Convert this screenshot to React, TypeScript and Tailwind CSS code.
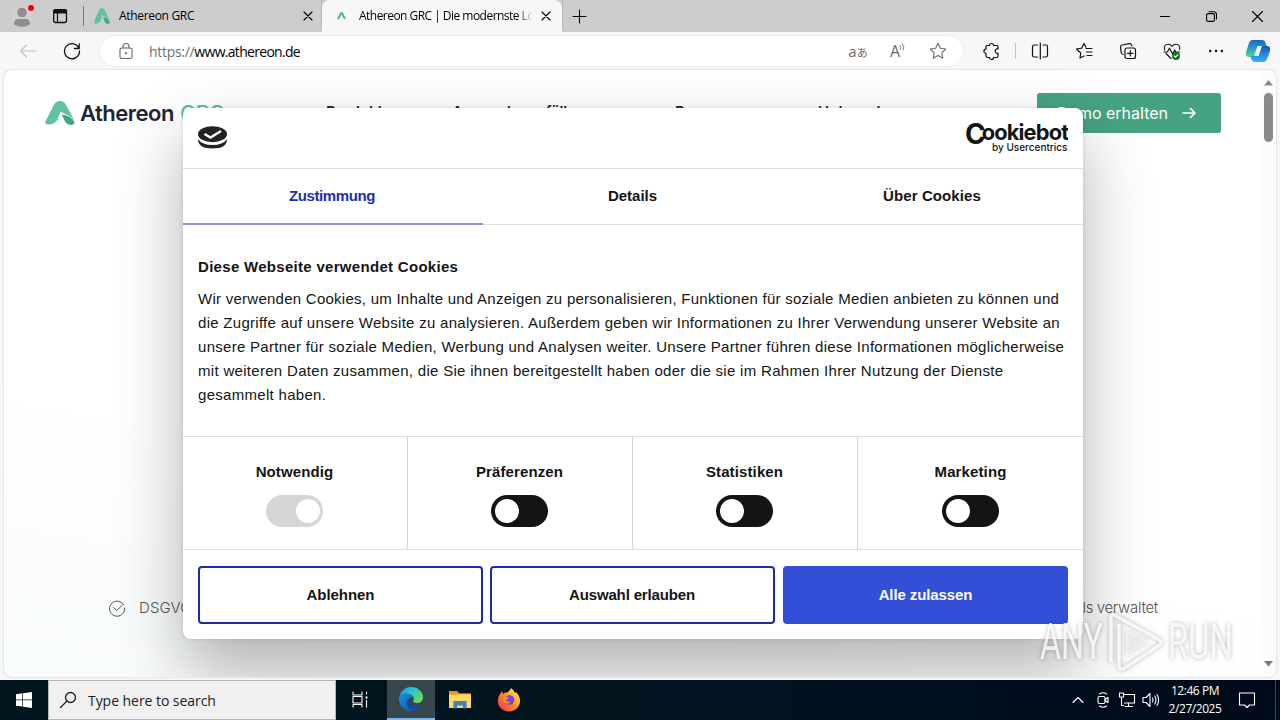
import type { ReactNode } from 'react';

interface IconProps {
  children: ReactNode;
  size?: number;
  className?: string;
}

function Icon({ children, size = 20, className = '' }: IconProps) {
  return (
    <svg
      width={size}
      height={size}
      viewBox={`0 0 ${size} ${size}`}
      fill="none"
      stroke="currentColor"
      strokeWidth="1.1"
      strokeLinecap="round"
      strokeLinejoin="round"
      className={`shrink-0 ${className}`}
    >
      {children}
    </svg>
  );
}

function AthereonMark({ width, height }: { width: number; height: number }) {
  return (
    <svg width={width} height={height} viewBox="0 0 30 24" preserveAspectRatio="none" className="shrink-0">
      <path
        d="M8.800 4Q11 0 15 0Q19 0 21 4L29 18.500Q24 14 19 12.500L15.500 10.500L12.500 19Q10.200 22.300 6 23.200Q-.8 24.500 .4 20.500Z"
        fill="#5fc3a1"
      />
      <path d="M17 13.500Q25 14 29.300 20.500Q30 24 26.500 24Q21.500 24.300 19.500 19.500Q17.500 16 17 13.500Z" fill="#48a583" />
    </svg>
  );
}

function CloseIcon() {
  return (
    <Icon size={10}>
      <path d="M1 1l8 8M9 1L1 9" />
    </Icon>
  );
}

function TabBar() {
  return (
    <div className="flex h-8 bg-[#cdcdcd] text-black">
      <div className="flex w-[84px] items-center">
        <svg width="84" height="32" viewBox="0 0 84 32">
          <circle cx="22" cy="16" r="11" fill="#d1d0cf" />
          <circle cx="22" cy="12.500" r="4.800" fill="#918e8c" />
          <path d="M14 24.500Q14 19 18 19h8q4 0 4 5.500q-8 4.500-16 0Z" fill="#918e8c" />
          <circle cx="31" cy="8" r="3" fill="#e30613" />
          <rect x="53.700" y="9.700" width="12.800" height="12.800" rx="2" fill="none" stroke="#111" strokeWidth="1.300" />
          <path d="M53.500 9.500h13.200v4H53.500z" fill="#111" />
          <path d="M57.500 13v9.500" stroke="#111" strokeWidth="1.200" />
          <path d="M83.500 6v20" stroke="#777" />
        </svg>
      </div>
      <div className="flex w-[238px] items-center rounded-br-md border-r border-[#b9b9b9] pl-[10px] pr-2">
        <AthereonMark width={16} height={16} />
        <span className="ml-[9px] flex-1 whitespace-nowrap text-[12px] tracking-[-0.32px]">Athereon GRC</span>
        <CloseIcon />
      </div>
      <div className="flex w-[240px] items-center rounded-t-lg bg-[#f7f7f7] pl-[15px] pr-[11px]">
        <svg width="9" height="8" viewBox="0 0 9 8">
          <path d="M1 7L4 1.200h1L8 7" fill="none" stroke="#56b595" strokeWidth="2" />
        </svg>
        <span className="ml-[13px] w-[173px] overflow-hidden whitespace-nowrap bg-[linear-gradient(90deg,#000_158px,transparent_174px)] bg-clip-text text-[12px] tracking-[-0.53px] text-transparent">
          Athereon GRC | Die modernste Lö
        </span>
        <span className="ml-auto">
          <CloseIcon />
        </span>
      </div>
      <div className="flex flex-1 items-center rounded-bl-md border-l border-[#b9b9b9] pl-[9px]">
        <Icon size={15}>
          <path d="M7.500 1v13M1 7.500h13" />
        </Icon>
      </div>
      <div className="grid w-[138px] grid-cols-3 items-center justify-items-center">
        <Icon size={10}>
          <path d="M0 5.500h10" />
        </Icon>
        <Icon size={11}>
          <rect x=".6" y="2.600" width="7.800" height="7.800" rx="1.500" />
          <path d="M3 .8h4.500q3 0 3 3V8" />
        </Icon>
        <Icon size={11}>
          <path d="M.5.5l10 10M10.500.5l-10 10" />
        </Icon>
      </div>
    </div>
  );
}

function StarPath() {
  return <path d="M10 2.300l2.400 4.900 5.300.8-3.900 3.800 1 5.400-4.800-2.600-4.800 2.600 1-5.400L2.300 8l5.300-.8z" />;
}

function Toolbar() {
  return (
    <div className="flex h-[38px] items-center bg-[#f7f7f7] text-[#111]">
      <div className="flex w-[100px] items-center pl-[18px]">
        <Icon className="text-[#c0c0c0]">
          <path d="M17.500 10H2.500M8.500 4l-6 6 6 6" />
        </Icon>
        <Icon className="ml-6">
          <path d="M17 7.500A7.500 7.500 0 1 0 17.500 10M17.200 2.800v4.700h-4.700" strokeWidth="1.300" />
        </Icon>
      </div>
      <div className="flex h-[30px] w-[863px] items-center rounded-full bg-white pl-4 pr-[15px] shadow-[0_0_2px_#ddd]">
        <Icon className="text-[#666]">
          <rect x="4" y="7" width="12" height="10.500" rx="1.800" />
          <path d="M7 7V5.500a3 3 0 0 1 6 0V7" />
          <circle cx="10" cy="12.300" r=".6" fill="currentColor" />
        </Icon>
        <span className="ml-[13px] flex-1 text-[14px] tracking-[-0.3px] text-[#707070]">
          https://<span className="tracking-[-0.7px] text-black">www.athereon.de</span>
        </span>
        <div className="flex items-center gap-5 text-[#6b6b6b]">
          <span className="flex w-5 items-baseline justify-center whitespace-nowrap">
            <span className="text-[15px] leading-5">a</span>
            <span className="font-['Noto_Sans_CJK_JP',sans-serif] text-[11px] leading-5">あ</span>
          </span>
          <span className="flex w-5 items-center">
            <span className="pl-0.5 text-[16px] leading-5">A</span>
            <Icon size={8} className="-ml-px mb-2">
              <path d="M1 2.500q1.500 1.500.5 4M3.300 1q2.700 2.500 1 6" strokeWidth=".9" />
            </Icon>
          </span>
          <Icon>
            <StarPath />
          </Icon>
        </div>
      </div>
      <div className="ml-[7px] flex w-[44px] justify-center">
        <Icon>
          <path
            d="M5 4.500h2.500a2 2 0 1 1 4 0H15a1 1 0 0 1 1 1V8a2.200 2.200 0 1 0 0 4.200V15a1.500 1.500 0 0 1-1.500 1.500h-3a2 2 0 1 1-4 0H5.500A1.500 1.500 0 0 1 4 15v-2.700a2 2 0 1 1 0-4.200V5.500a1 1 0 0 1 1-1Z"
            strokeWidth="1.200"
          />
        </Icon>
      </div>
      <div className="ml-[1px] mr-[2px] h-4 w-px bg-[#c4c4c4]" />
      <div className="grid flex-1 grid-cols-[44px_44px_44px_44px_44px_42px] items-center justify-items-center">
        <Icon>
          <path d="M10.300 2v16M7.500 4H4.300Q2.500 4 2.500 5.800v8.400Q2.500 16 4.300 16h3.200M13 4h2.700q1.800 0 1.800 1.800v8.400q0 1.800-1.800 1.800H13" strokeWidth="1.200" />
        </Icon>
        <Icon>
          <path d="M10 15l-4 2 .8-5L2.500 8l5.200-.8L10 2.500l2 3.800M12 7.500h6M12.500 11H18M13 14.500h5" strokeWidth="1.200" />
        </Icon>
        <Icon>
          <rect x="7" y="7" width="10.500" height="10.500" rx="2" strokeWidth="1.200" />
          <path d="M12.300 9.500v5.500M9.500 12.300H15M5 13.500Q3.500 13 3.200 11.500L2.500 6.300Q2.300 4.500 4 4l7.500-1.400q1.700-.2 2.200 1.500l.2.800" strokeWidth="1.200" />
        </Icon>
        <Icon>
          <path d="M2.500 9Q1.500 3.500 6 3.300 8.500 3.200 10 5.500 11.500 3.200 14 3.300q4.500.2 3.600 5.200M4 12.500l5 5M2 11h3.500L7.500 7l3 6 2.200-4 1 2h4" />
          <circle cx="14" cy="15" r="4" fill="#11741a" stroke="none" />
          <path d="M12.300 15l1.200 1.200 2.300-2.300" stroke="#fff" />
        </Icon>
        <Icon>
          <path d="M4.200 10h.1M10 10h.1M15.800 10h.1" strokeWidth="2.400" />
        </Icon>
        <svg width="26" height="24" viewBox="0 0 26 24" className="mr-[3px]">
          <defs>
            <linearGradient id="copilotLeft" x1="0" y1="0" x2="0" y2="1">
              <stop offset="0" stopColor="#1b65c9" />
              <stop offset=".45" stopColor="#2897cf" />
              <stop offset="1" stopColor="#56d887" />
            </linearGradient>
            <linearGradient id="copilotRight" x1="0" y1="0" x2="0" y2="1">
              <stop offset="0" stopColor="#1c52c6" />
              <stop offset="1" stopColor="#35b4f1" />
            </linearGradient>
          </defs>
          <path d="M8 1h9q3 0 4 4l1 3h-5q-3 0-4 3l-2 5q-1 2-4 2H4q-4 0-3-5L4 4q1-3 4-3Z" fill="url(#copilotLeft)" />
          <path d="M18 23H10q-3 0-4-4l-.5-2H9q3 0 4-3l2-5q1-2 4-2h3q4 0 3 5l-3 8q-1 3-4 3Z" fill="url(#copilotRight)" />
          <path d="M12.500 7h4.500l-3.500 10H9z" fill="#f3fafa" />
        </svg>
      </div>
    </div>
  );
}

function SiteHeader() {
  return (
    <div className="flex h-[86px] items-center pl-[41px] pr-[41px]">
      <AthereonMark width={30} height={24} />
      <div className="ml-[5px] w-[246px] whitespace-nowrap font-['Inter',sans-serif] text-[22px] font-semibold leading-6 tracking-[-0.5px] text-[#1c2636]">
        Athereon <span className="ml-px font-normal tracking-[-0.9px] text-[#5fbd9c]">GRC</span>
      </div>
      <nav className="mb-0.5 flex whitespace-nowrap font-['Inter',sans-serif] text-[15px] font-semibold leading-6 text-[#1c2636]">
        <span className="w-[126px]">Produkt</span>
        <span className="w-[223px] tracking-[-0.2px]">Anwendungsfälle</span>
        <span className="w-[143px]">Ressourcen</span>
        <span>Unternehmen</span>
      </nav>
      <div className="ml-auto flex h-10 w-[184px] items-center rounded-[3px] bg-[#46a381] pl-5 font-['Inter',sans-serif] text-[16px] text-white">
        <span className="w-[125px] whitespace-nowrap pb-px">Demo erhalten</span>
        <Icon size={14}>
          <path d="M1 7h12M8.500 2.500L13 7l-4.500 4.500" strokeWidth="1.600" />
        </Icon>
      </div>
    </div>
  );
}

const consentText = [
  { text: 'Wir verwenden Cookies, um Inhalte und Anzeigen zu personalisieren, Funktionen für soziale Medien anbieten zu können und', className: 'tracking-[0.257px]' },
  { text: 'die Zugriffe auf unsere Website zu analysieren. Außerdem geben wir Informationen zu Ihrer Verwendung unserer Website an', className: 'tracking-[0.285px]' },
  { text: 'unsere Partner für soziale Medien, Werbung und Analysen weiter. Unsere Partner führen diese Informationen möglicherweise', className: 'tracking-[0.285px]' },
  { text: 'mit weiteren Daten zusammen, die Sie ihnen bereitgestellt haben oder die sie im Rahmen Ihrer Nutzung der Dienste', className: 'tracking-[0.305px]' },
  { text: 'gesammelt haben.', className: 'tracking-[0.3px]' },
];

const categories = [
  { label: 'Notwendig', locked: true },
  { label: 'Präferenzen', locked: false },
  { label: 'Statistiken', locked: false },
  { label: 'Marketing', locked: false },
];

function CookieDialog() {
  return (
    <div className="absolute left-[179px] top-[38px] flex h-[531px] w-[900px] flex-col rounded-lg bg-white font-['Liberation_Sans',Arial,sans-serif] text-[15px] text-[#141414] shadow-[0_32px_68px_rgba(0,0,0,0.3),0_0_4px_rgba(0,0,0,0.12)]">
      {/* Logos */}
      <div className="flex h-[60px] items-center justify-between px-[15px]">
        <svg width="29" height="23" viewBox="0 0 29 23" className="mb-0.5">
          <path d="M0 13Q4 19 14.500 19T29 13Q29 22.500 14.500 22.500T0 13Z" fill="#222" />
          <ellipse cx="14.500" cy="8.200" rx="14.500" ry="8" fill="#222" />
          <path d="M6.500 8l6 3.500L23 5" fill="none" stroke="#fff" strokeWidth="2.400" />
        </svg>
        <svg width="103" height="32" viewBox="0 0 103 32" fill="#141414" fontFamily="Inter, sans-serif">
          <text x="0" y="22" fontSize="21.800" fontWeight="700" letterSpacing="-.85">
            <tspan fontSize="28" letterSpacing="-4">C</tspan>
            <tspan dy="-4">ookiebot</tspan>
          </text>
          <text x="27" y="29" fontSize="10.500" fontWeight="500" textLength="75.500" lengthAdjust="spacingAndGlyphs">by Usercentrics</text>
        </svg>
      </div>

      {/* Tabs */}
      <div className="grid h-[57px] grid-cols-3 border-y border-[#dedede] text-center font-bold leading-[54px]">
        <span className="mb-px border-b-2 border-[#8b92d3] pr-0.5 tracking-[-0.4px] text-[#1a2fad]">Zustimmung</span>
        <span className="pr-px">Details</span>
        <span className="pr-0.5 tracking-[0.1px]">Über Cookies</span>
      </div>

      {/* Text */}
      <div className="h-[211px] px-[15px] pt-[30px]">
        <h2 className="mb-2 font-bold leading-6 tracking-[0.3px]">Diese Webseite verwendet Cookies</h2>
        {consentText.map((line) => (
          <p key={line.text} className={`whitespace-nowrap leading-6 ${line.className}`}>
            {line.text}
          </p>
        ))}
      </div>

      {/* Categories */}
      <div className="grid h-[114px] grid-cols-4 divide-x divide-[#d6d6d6] border-y border-[#dedede]">
        {categories.map(({ label, locked }) => (
          <div key={label} className="flex flex-col items-center pr-px pt-[23px] last:pr-0">
            <span className="font-bold leading-6 tracking-[0.12px]">{label}</span>
            <span
              className={`mt-[10.500px] flex h-8 w-[57px] items-center rounded-full pl-[4px] pr-[3px] ${
                locked ? 'justify-end bg-[#d6d6d6]' : 'bg-[#141414]'
              }`}
            >
              <span className="size-6 rounded-full bg-white" />
            </span>
          </div>
        ))}
      </div>

      {/* Buttons */}
      <div className="grid grid-cols-[285px_285px_285px] justify-between px-[15px] pt-4 text-center font-bold leading-[54px]">
        <button className="rounded border-2 border-[#1a2f9f] tracking-[-0.05px]">Ablehnen</button>
        <button className="-ml-px mr-px rounded border-2 border-[#1a2f9f] tracking-[-0.15px]">Auswahl erlauben</button>
        <button className="rounded border-2 border-[#334fd7] bg-[#334fd7] tracking-[-0.1px] text-white">Alle zulassen</button>
      </div>
    </div>
  );
}

function Watermark() {
  return (
    <svg
      width="200"
      height="64"
      viewBox="0 0 200 64"
      className="absolute bottom-[3px] right-[40px] drop-shadow-[0_0_2px_rgba(0,0,0,0.35)]"
      fill="#fff"
      fillOpacity=".8"
      fontFamily="Roboto, sans-serif"
    >
      <text x="4" y="49" fontSize="50" textLength="63" lengthAdjust="spacingAndGlyphs">ANY</text>
      <text x="132" y="49" fontSize="50" textLength="65" lengthAdjust="spacingAndGlyphs">RUN</text>
      <path d="M75 52V8q0-5 5-2l42 23q6 4 0 7L89 58q-6 3-6-3V14" fill="none" stroke="#fff" strokeOpacity=".8" strokeWidth="3.500" />
      <path d="M90 20v25l24-13Z" fill="#fff" fillOpacity=".55" />
    </svg>
  );
}

function Page() {
  return (
    <div className="bg-[#f7f7f7] px-1 pb-[3px]">
      <div className="relative flex h-[607px] overflow-hidden rounded-lg bg-white bg-[linear-gradient(10deg,#f8fcfb_0%,#fff_35%)] shadow-[0_0_2px_#bbb]">
        <div className="flex flex-1 flex-col">
          <SiteHeader />
          <div className="mb-[57px] mt-auto flex items-center justify-between pl-[104px] pr-[104px] font-['Inter',sans-serif] text-[15px] font-light leading-6 text-[#555]">
            <span className="flex items-center">
              <Icon size={18}>
                <path d="M15.500 5.500A7.600 7.600 0 1 0 16.700 9M5.500 8.500l3.300 3L14.500 6" strokeWidth="1" />
              </Icon>
              <span className="ml-[13px] tracking-[0.15px]">DSGVO-konform</span>
            </span>
            <span className="tracking-[-0.3px] [word-spacing:-0.500px]">Tools verwaltet</span>
          </div>
        </div>
        <div className="w-[14px]" />
        <CookieDialog />
        {/* Scrollbar */}
        <div className="absolute right-0 top-0 flex h-full w-[14px] flex-col items-center bg-[#fcfcfc] pb-[10px] pr-[2px] pt-[10px]">
          <svg width="9" height="6" viewBox="0 0 9 6">
            <path d="M0 5.500L4.500 0 9 5.500z" fill="#888" />
          </svg>
          <div className="mt-[7px] h-[49px] w-[9px] rounded-full bg-[#8a8a8a]" />
          <svg width="9" height="6" viewBox="0 0 9 6" className="mt-auto">
            <path d="M0 0l4.500 5.500L9 0z" fill="#777" />
          </svg>
        </div>
        <Watermark />
      </div>
    </div>
  );
}

function Taskbar() {
  return (
    <div className="flex h-10 items-stretch bg-[linear-gradient(90deg,#00151d,#00131e_60%,#000a1a)] text-white">
      <div className="flex w-12 items-center justify-center">
        <svg width="16" height="16" viewBox="0 0 16 16" fill="#fff">
          <path d="M0 2.200l6.300-.9v6.200H0zM7 1.200L16 0v7.500H7zM0 8.200h6.300v6.300L0 13.700zM7 8.200h9V16l-9-1.300z" />
        </svg>
      </div>
      <div className="flex w-[288px] items-center border border-[#b5b5b5] bg-[#f0f0f0] pl-[10px] text-[#222]">
        <Icon size={18}>
          <circle cx="11.500" cy="6.500" r="5" strokeWidth="1.300" />
          <path d="M8 10L1.500 16.500" strokeWidth="1.300" />
        </Icon>
        <span className="ml-[11px] text-[14px] tracking-[-0.05px]">Type here to search</span>
      </div>
      <div className="flex w-[51px] items-center justify-center pr-1">
        <Icon size={18}>
          <path d="M2 1v3h9V1M2 16v-2.500h9V16M2 5.500h9v6.500H2zM15.500 1v2M15.500 9.500V16" />
          <path d="M14.500 5.500h2v2h-2z" fill="#fff" stroke="none" />
        </Icon>
      </div>
      <div className="flex w-12 items-center justify-center border-b-2 border-[#76b9ed] bg-[#36474e]">
        <svg width="24" height="24" viewBox="0 0 24 24">
          <defs>
            <linearGradient id="edgeTop" x1="0" y1="0" x2="1" y2=".6">
              <stop offset="0" stopColor="#1794dc" />
              <stop offset=".5" stopColor="#2bc3d2" />
              <stop offset="1" stopColor="#64dc57" />
            </linearGradient>
            <linearGradient id="edgeBottom" x1="0" y1="0" x2="1" y2="1">
              <stop offset="0" stopColor="#1b93e0" />
              <stop offset="1" stopColor="#0b4a9c" />
            </linearGradient>
          </defs>
          <path d="M.5 11C1 4 6 0 12 0c7 0 12 5 12 10 0 4-3 6-6 6-3 0-4.500-1-3.500-2.500S15 8 10 7C5 6 1 8 .5 11Z" fill="url(#edgeTop)" />
          <path d="M0 12C0 8 4 5.500 8.500 6.500 12 7 14.500 9.500 14.500 11.500 12 9 8 12 9 16s6 5.500 13 2c-2 3.500-5.500 6-10 6C5 24 0 19 0 12Z" fill="url(#edgeBottom)" />
          <path d="M9 12q-3 5 1 9 4 4 12-3-5 3-9 1t-4-7Z" fill="#0d4f9f" />
        </svg>
      </div>
      <div className="flex w-[49px] items-center justify-center">
        <svg width="22" height="20" viewBox="0 0 22 20">
          <path d="M0 2h8l2 1.500h12V18H0z" fill="#f6c945" />
          <path d="M0 1h8l2 2-2 1.500H0z" fill="#e29a1d" />
          <path d="M0 5h22v13H0z" fill="#fcd768" />
          <path d="M4.500 11h13v7.500h-3.500v-3h-6v3H4.500z" fill="#3784c5" />
        </svg>
      </div>
      <div className="flex w-[49px] items-center justify-center">
        <svg width="24" height="24" viewBox="0 0 24 24">
          <defs>
            <linearGradient id="fox" x1="1" y1="0" x2="0" y2="1">
              <stop offset=".1" stopColor="#ffe84a" />
              <stop offset=".5" stopColor="#ff8a22" />
              <stop offset="1" stopColor="#f0265e" />
            </linearGradient>
          </defs>
          <path d="M3 6l2-3 1 3 3-2 .5 1Q13 3 14 0q3 2 4 5l1-1q4 4 4 9c0 6-5 10.500-11 10.500S.8 19 .8 13Q.8 9 3 6Z" fill="url(#fox)" />
          <circle cx="12.500" cy="12" r="4.800" fill="#7745d6" />
          <path d="M6 9q4-1 6 1-3 1-3 2.500 2 2 5 1-2 3-6 1.500Q5 13 6 9Z" fill="#ff8b24" />
        </svg>
      </div>

      {/* Tray */}
      <div className="ml-auto flex items-center">
        <Icon size={12}>
          <path d="M1 8.500L6 3.500l5 5" />
        </Icon>
        <Icon size={16} className="ml-[11px]">
          <rect x="3" y="4.500" width="7" height="7" rx="1.500" />
          <path d="M10 7.500l3-2v5l-3-2M4.500 2q3.500-2.500 7 0M4.500 14q3.500 2.500 7 0" />
        </Icon>
        <Icon size={18} className="ml-[7px]">
          <path d="M5.500 3.500h11v8.500h-10M10.500 12v3.500M7 15.500h7.500M1.500 2h4v4h-4zM3.500 6v8.500h2" />
        </Icon>
        <Icon size={18} className="ml-[6px]">
          <path d="M1 6.500h3l4-4v13l-4-4H1zM10.500 7q1 2 0 4M12.800 5q2.200 4 0 8M15 3.500q3.200 5.500 0 11" />
        </Icon>
        <div className="ml-[6px] w-[58px] text-center text-[12px] leading-[18px] tracking-[-0.45px]">
          <div>12:46 PM</div>
          <div>2/27/2025</div>
        </div>
        <Icon size={18} className="ml-[14px]">
          <path d="M1.500 2h15v12h-5L9 16.500 6.500 14h-5z" />
        </Icon>
        <div className="ml-[19px] mr-[4px] h-10 w-px bg-[#3a4652]" />
      </div>
    </div>
  );
}

export default function App() {
  return (
    <div className="h-[720px] w-[1280px] overflow-hidden bg-[#f7f7f7] font-['Open_Sans','Noto_Sans',sans-serif]">
      <TabBar />
      <Toolbar />
      <Page />
      <Taskbar />
    </div>
  );
}
